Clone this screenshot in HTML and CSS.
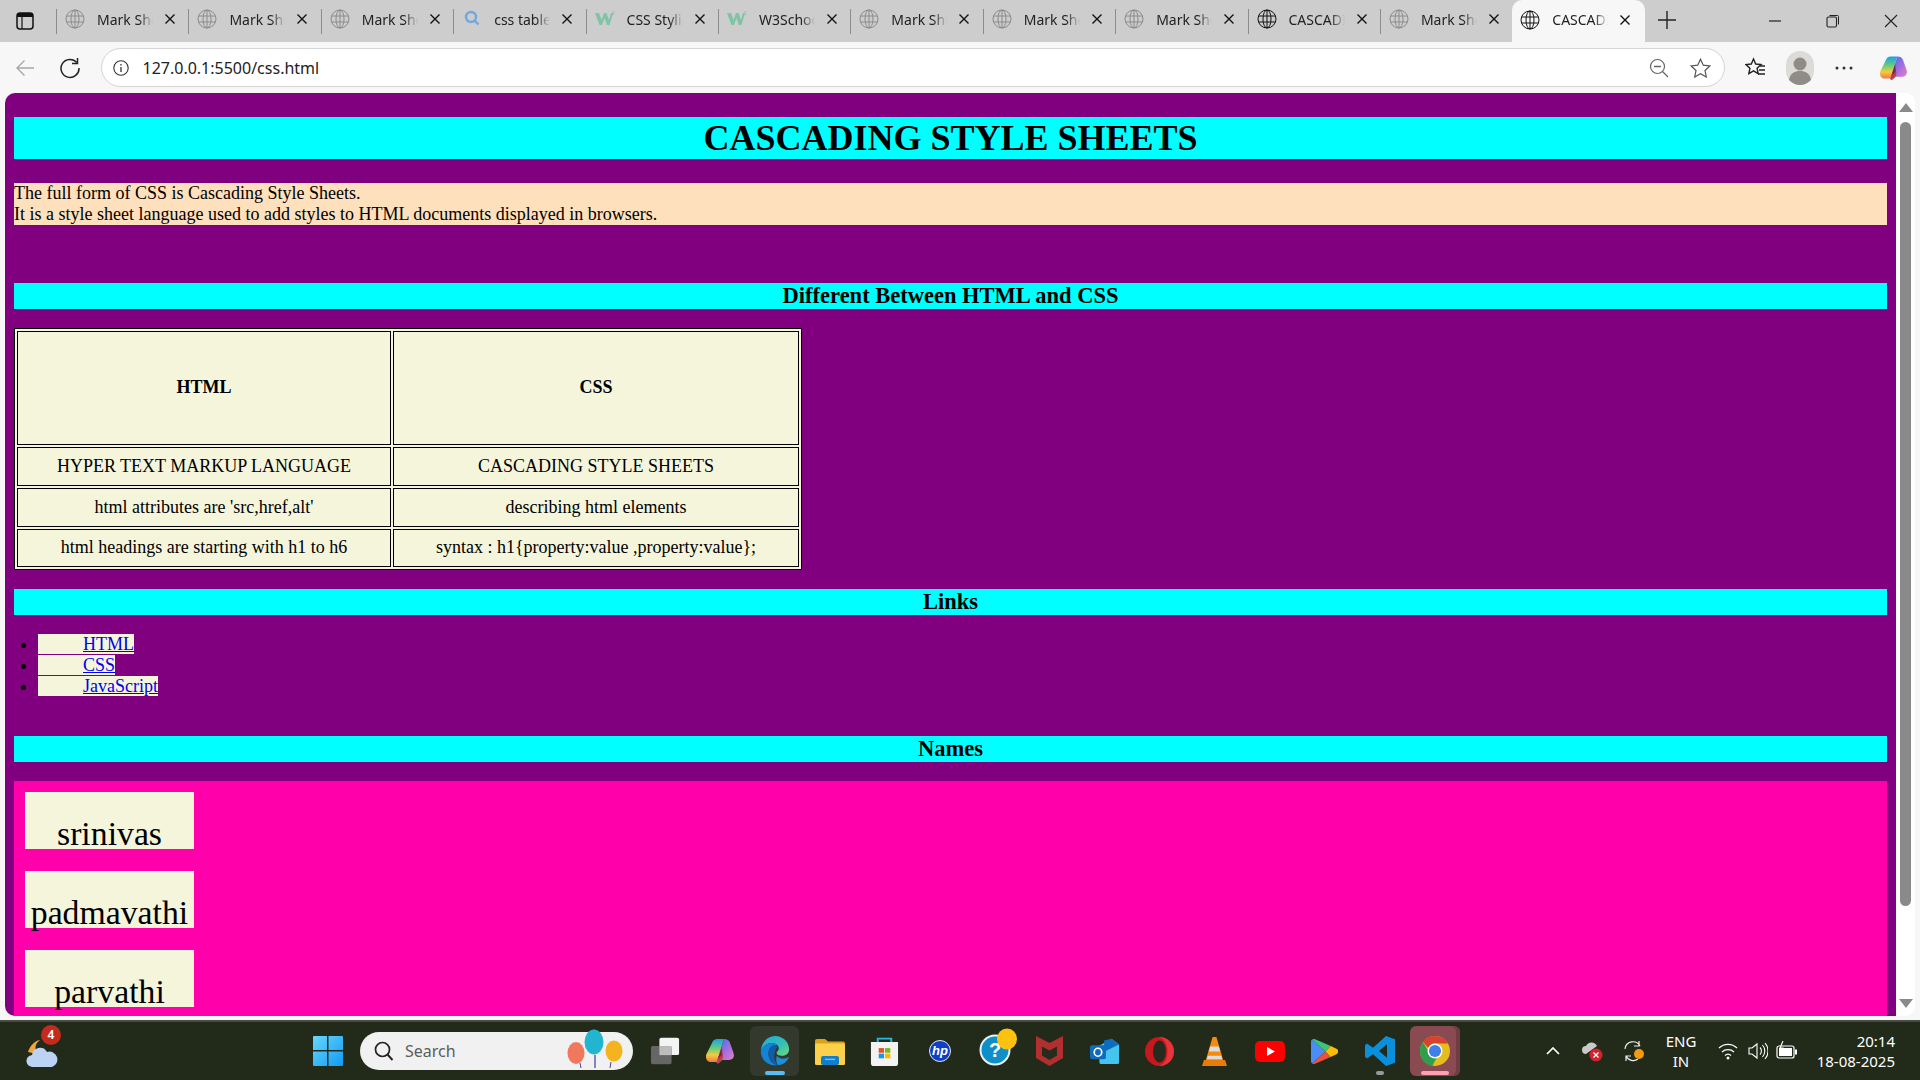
FILE: index.html
```html
<!DOCTYPE html>
<html lang="en">
<head>
  <meta charset="UTF-8" />
  <title>CASCADING STYLE SHEETS</title>
  <link rel="stylesheet" href="styles.css">
</head>
<body>
  <svg class="defs" width="0" height="0">
    <defs>
      <linearGradient id="cop1" x1="0" y1="0" x2="0" y2="1"><stop offset="0" stop-color="#1f9fe6"/><stop offset=".4" stop-color="#63cf7c"/><stop offset=".7" stop-color="#f6cb3e"/><stop offset="1" stop-color="#f0764a"/></linearGradient>
      <linearGradient id="cop2" x1="0" y1="0" x2="1" y2="1"><stop offset="0" stop-color="#2f6fe8"/><stop offset=".55" stop-color="#a96ee0"/><stop offset="1" stop-color="#ee85b8"/></linearGradient>
    </defs>
    <symbol id="globe" viewBox="0 0 20 20">
      <g fill="none" stroke="currentColor" stroke-width="1">
        <circle cx="10" cy="10" r="9"/>
        <ellipse cx="10" cy="10" rx="4" ry="9"/>
        <path d="M10 1v18M1.600 7h16.800M1.600 13h16.800"/>
      </g>
    </symbol>
    <symbol id="close" viewBox="0 0 12 12">
      <path d="M1.500 1.500l9 9M10.500 1.500l-9 9" fill="none" stroke="currentColor" stroke-width="1.400"/>
    </symbol>
    <symbol id="copilot" viewBox="0 0 28 26">
      <path d="M11 1h7l-7 23H5c-4 0-6-4-4.500-8L6 5c1-3 3-4 5-4z" fill="url(#cop1)"/>
      <path d="M18 1c3 0 5 1 6 4l3.500 10c1.500 4-1 7-4.500 7h-7l-3 3c-1 .8-2 .5-2.500-.5z" fill="url(#cop2)"/>
      <path d="M16 8l-5 15c-.3 1.500.5 2.500 2 1.800l3-2.800 1-3z" fill="#c93a3a"/>
      <path d="M15.500 10l-3.500 11 4-4z" fill="#6b2a52"/>
    </symbol>
  </svg>

  <div class="tabbar">
    <div class="tab-toggle">
      <svg width="18" height="18" viewBox="0 0 18 18"><rect x="1" y="1" width="16" height="16" rx="3" fill="none" stroke="#111" stroke-width="1.500"/><path d="M1 2.500a1.500 1.500 0 0 1 1.500-1.500h13a1.500 1.500 0 0 1 1.500 1.500V5H1z" fill="#111"/><path d="M6 5v12" stroke="#111" stroke-width="1.200"/></svg>
    </div>
    <div class="tab"><svg class="fav grey"><use href="#globe"/></svg><span class="tab-text">Mark Sheet</span><svg class="tab-x"><use href="#close"/></svg></div>
    <div class="tab"><svg class="fav grey"><use href="#globe"/></svg><span class="tab-text">Mark Sheet</span><svg class="tab-x"><use href="#close"/></svg></div>
    <div class="tab"><svg class="fav grey"><use href="#globe"/></svg><span class="tab-text">Mark Sheet</span><svg class="tab-x"><use href="#close"/></svg></div>
    <div class="tab">
      <svg class="fav" viewBox="0 0 20 20"><circle cx="9" cy="8" r="5" fill="none" stroke="#6fa8dc" stroke-width="2.400"/><path d="M12.500 11.500l4 4" stroke="#6fa8dc" stroke-width="2.400"/></svg>
      <span class="tab-text">css table border</span><svg class="tab-x"><use href="#close"/></svg>
    </div>
    <div class="tab">
      <svg class="fav" viewBox="0 0 20 20"><path d="M0 4h4l2.500 7 2.500-7h2.500l2.500 7 2-7h2l-3.500 12h-2.500l-2.500-7-2.500 7h-2.500z" fill="#7fc4a6"/><text x="16.500" y="6" font-size="5" fill="#7fc4a6" font-family="Liberation Sans, sans-serif">3</text></svg>
      <span class="tab-text">CSS Styling</span><svg class="tab-x"><use href="#close"/></svg>
    </div>
    <div class="tab">
      <svg class="fav" viewBox="0 0 20 20"><path d="M0 4h4l2.500 7 2.500-7h2.500l2.500 7 2-7h2l-3.500 12h-2.500l-2.500-7-2.500 7h-2.500z" fill="#7fc4a6"/><text x="16.500" y="6" font-size="5" fill="#7fc4a6" font-family="Liberation Sans, sans-serif">3</text></svg>
      <span class="tab-text">W3Schools</span><svg class="tab-x"><use href="#close"/></svg>
    </div>
    <div class="tab"><svg class="fav grey"><use href="#globe"/></svg><span class="tab-text">Mark Sheet</span><svg class="tab-x"><use href="#close"/></svg></div>
    <div class="tab"><svg class="fav grey"><use href="#globe"/></svg><span class="tab-text">Mark Sheet</span><svg class="tab-x"><use href="#close"/></svg></div>
    <div class="tab"><svg class="fav grey"><use href="#globe"/></svg><span class="tab-text">Mark Sheet</span><svg class="tab-x"><use href="#close"/></svg></div>
    <div class="tab"><svg class="fav"><use href="#globe"/></svg><span class="tab-text">CASCADING</span><svg class="tab-x"><use href="#close"/></svg></div>
    <div class="tab"><svg class="fav grey"><use href="#globe"/></svg><span class="tab-text">Mark Sheet</span><svg class="tab-x"><use href="#close"/></svg></div>
    <div class="tab active"><svg class="fav"><use href="#globe"/></svg><span class="tab-text">CASCADING</span><svg class="tab-x"><use href="#close"/></svg></div>
    <div class="new-tab">
      <svg width="18" height="18" viewBox="0 0 18 18"><path d="M9 0v18M0 9h18" stroke="#222" stroke-width="1.400"/></svg>
    </div>
    <div class="win-controls">
      <svg width="14" height="14" viewBox="0 0 14 14"><path d="M1 7h12" stroke="#222" stroke-width="1.200"/></svg>
      <svg width="14" height="14" viewBox="0 0 14 14"><path d="M3.500 1.500h8a1 1 0 0 1 1 1v8" fill="none" stroke="#222"/><rect x="1" y="3" width="9.500" height="10" rx="1.500" fill="none" stroke="#222" stroke-width="1.100"/></svg>
      <svg width="14" height="14" viewBox="0 0 14 14"><path d="M1 1l12 12M13 1L1 13" stroke="#222" stroke-width="1.100"/></svg>
    </div>
  </div>

  <div class="toolbar">
    <svg class="tool-back" width="20" height="18" viewBox="0 0 20 18"><path d="M19 9H2M9.500 1.500L2 9l7.500 7.500" fill="none" stroke="#a8a8a8" stroke-width="1.400"/></svg>
    <svg class="tool-reload" width="22" height="22" viewBox="0 0 22 22"><path d="M17.800 5.500A9 9 0 1 0 20 11" fill="none" stroke="#222" stroke-width="1.500"/><path d="M18.500 1v5.500H13" fill="none" stroke="#222" stroke-width="1.500"/></svg>
    <div class="address">
      <svg width="16" height="16" viewBox="0 0 16 16"><circle cx="8" cy="8" r="7.200" fill="none" stroke="#333" stroke-width="1.100"/><path d="M8 7v5M8 4v1.400" stroke="#333" stroke-width="1.300"/></svg>
      <span class="url">127.0.0.1:5500/css.html</span>
      <svg class="zoom-out" width="20" height="20" viewBox="0 0 20 20"><circle cx="8.500" cy="8.500" r="7" fill="none" stroke="#666" stroke-width="1.200"/><path d="M5 8.500h7M13.500 13.500l5.500 5.500" stroke="#666" stroke-width="1.300"/></svg>
      <svg class="star" width="21" height="20" viewBox="0 0 21 20"><path d="M10.500 1.200l2.800 6 6.500.8-4.800 4.500 1.300 6.500-5.800-3.300-5.800 3.300 1.300-6.500L1.200 8l6.500-.8z" fill="none" stroke="#555" stroke-width="1.200"/></svg>
    </div>
    <svg class="tool-favs" width="21" height="21" viewBox="0 0 21 21"><path d="M8.500 2l2.200 5 5.300.6-3.900 3.600 1 5.300-4.600-2.700-4.600 2.700 1-5.300L1 7.600 6.300 7z" fill="none" stroke="#222" stroke-width="1.400"/><path d="M15 9h5M14 13h6M13 17h7" stroke="#222" stroke-width="1.300"/></svg>
    <div class="avatar">
      <svg width="28" height="34" viewBox="0 0 28 34"><rect width="28" height="34" rx="14" fill="#dcdbd8"/><circle cx="14" cy="13" r="6.500" fill="#8f8c88"/><path d="M3 29c1-7 6-9 11-9s10 2 11 9c-3 3-7 5-11 5s-8-2-11-5z" fill="#8f8c88"/></svg>
    </div>
    <svg class="tool-dots" width="18" height="4" viewBox="0 0 18 4"><circle cx="2" cy="2" r="1.500" fill="#333"/><circle cx="9" cy="2" r="1.500" fill="#333"/><circle cx="16" cy="2" r="1.500" fill="#333"/></svg>
    <svg class="tool-copilot" width="27" height="26"><use href="#copilot"/></svg>
  </div>

  <div class="viewport-wrap">
    <div class="viewport">
      <main class="page">
        <h1 class="title">CASCADING STYLE SHEETS</h1>
        <p class="intro">The full form of CSS is Cascading Style Sheets.<br>It is a style sheet language used to add styles to HTML documents displayed in browsers.</p>

        <h3 class="bar bar-diff">Different Between HTML and CSS</h3>
        <table class="compare">
          <tr class="head"><th class="col-a">HTML</th><th class="col-b">CSS</th></tr>
          <tr><td>HYPER TEXT MARKUP LANGUAGE</td><td>CASCADING STYLE SHEETS</td></tr>
          <tr><td>html attributes are 'src,href,alt'</td><td>describing html elements</td></tr>
          <tr class="last"><td>html headings are starting with h1 to h6</td><td>syntax : h1{property:value ,property:value};</td></tr>
        </table>

        <h3 class="bar bar-links">Links</h3>
        <ul class="links">
          <li><a href="#">HTML</a></li>
          <li><a href="#">CSS</a></li>
          <li><a href="#">JavaScript</a></li>
        </ul>

        <h3 class="bar bar-names">Names</h3>
        <div class="names">
          <div class="name">srinivas</div>
          <div class="name">padmavathi</div>
          <div class="name">parvathi</div>
        </div>
      </main>
      <div class="scrollbar">
        <span class="arrow up"></span>
        <span class="thumb"></span>
        <span class="arrow down"></span>
      </div>
    </div>
  </div>

  <footer class="taskbar">
    <div class="weather">
      <svg width="32" height="36" viewBox="0 0 32 36">
        <path d="M14 7a10 10 0 0 0-3 14L2 19c2-6 6-11 12-12z" fill="#f2a73b"/>
        <path d="M7 34a6 6 0 0 1-1-12 8 8 0 0 1 15-3 7 7 0 0 1 5 15z" fill="#bcd3f4"/>
      </svg>
      <span class="badge">4</span>
    </div>

    <div class="start">
      <svg width="30" height="30" viewBox="0 0 30 30">
        <defs><linearGradient id="win" x1="0" y1="0" x2="1" y2="1"><stop offset="0" stop-color="#6ad6fb"/><stop offset="1" stop-color="#0f9bf5"/></linearGradient></defs>
        <path d="M1 0h13v14H0V1a1 1 0 0 1 1-1zM15.500 0H29a1 1 0 0 1 1 1v13H15.500zM0 15.500h14V30H1a1 1 0 0 1-1-1zM15.500 15.500H30V29a1 1 0 0 1-1 1H15.500z" fill="url(#win)"/>
      </svg>
    </div>

    <div class="search">
      <svg width="20" height="20" viewBox="0 0 20 20"><circle cx="8.500" cy="8.500" r="7" fill="none" stroke="#222" stroke-width="1.700"/><path d="M13.500 13.500l5 5.500" stroke="#222" stroke-width="1.900"/></svg>
      <span class="search-text">Search</span>
      <svg class="balloons" width="58" height="40" viewBox="0 0 58 40">
        <ellipse cx="9" cy="24" rx="8.500" ry="11" fill="#f0785c"/>
        <path d="M13 34l1 5" stroke="#5a3d8a"/>
        <ellipse cx="47" cy="22" rx="8.500" ry="10.500" fill="#f4b31f"/>
        <path d="M44 33l-1 6" stroke="#5a3d8a"/>
        <ellipse cx="27" cy="13" rx="9.500" ry="12.500" fill="#22b5cf"/>
        <path d="M28 26v13" stroke="#3b3f9a" stroke-width="1.200"/>
      </svg>
    </div>

    <div class="apps">
      <div class="app">
        <svg width="30" height="28" viewBox="0 0 32 34" preserveAspectRatio="none"><rect x="10" y="1" width="21" height="21" rx="2" fill="#f4f4f4"/><rect x="1" y="11" width="22" height="22" rx="2" fill="#666"/><rect x="10" y="11" width="13" height="11" fill="#bdbdbd"/></svg>
      </div>
      <div class="app">
        <svg width="28" height="26"><use href="#copilot"/></svg>
      </div>
      <div class="app is-edge">
        <svg width="30" height="30" viewBox="0 0 32 32">
          <defs><linearGradient id="edge" x1="0" y1="0" x2="1" y2="1"><stop offset="0" stop-color="#1fa8e0"/><stop offset=".6" stop-color="#35c1b0"/><stop offset="1" stop-color="#6fdc7e"/></linearGradient></defs>
          <path d="M1 15C2 6 9 0 16 0c9 0 15 7 15 14 0 5-4 7-8 7-4 0-6-2-5-4 2-2 3-4 1-7-3-4-13-4-18 5z" fill="url(#edge)"/>
          <path d="M1 15c5-9 15-9 18-5-5-2-10 2-10 9 0 6 4 11 10 12C9 33 0 25 1 15z" fill="#1583d4"/>
          <path d="M19 10c-5-2-10 2-10 9 0 6 4 11 10 12-3-4-5-9-3-14 .5-3 2-5 3-7z" fill="#0f5da8"/>
          <path d="M19 31c6 0 10-4 12-9-4 3-10 3-13-1-1 3-1 7 1 10z" fill="#1b8fd8"/>
        </svg>
        <span class="run-pill blue"></span>
      </div>
      <div class="app">
        <svg width="30" height="27" viewBox="0 0 30 30" preserveAspectRatio="none"><path d="M0 3a2 2 0 0 1 2-2h8l3 3h15a2 2 0 0 1 2 2v4H0z" fill="#d9a21b"/><rect y="6" width="30" height="24" rx="1.500" fill="#fbd14b"/><rect x="6" y="20" width="18" height="10" rx="2" fill="#0f7fcc"/><rect x="10" y="23" width="10" height="1.500" fill="#7cc3ee"/></svg>
      </div>
      <div class="app">
        <svg width="29" height="29" viewBox="0 0 30 34" preserveAspectRatio="none"><path d="M8 6V2h14v4" fill="none" stroke="#27b5e6" stroke-width="2"/><path d="M1 6h28v25a3 3 0 0 1-3 3H4a3 3 0 0 1-3-3z" fill="#f3f3f3"/><rect x="9" y="13" width="5.500" height="5.500" fill="#e8522a"/><rect x="15.500" y="13" width="5.500" height="5.500" fill="#7eb821"/><rect x="9" y="19.500" width="5.500" height="5.500" fill="#0d9cec"/><rect x="15.500" y="19.500" width="5.500" height="5.500" fill="#fbb900"/></svg>
      </div>
      <div class="app">
        <svg width="22" height="22" viewBox="0 0 22 22"><circle cx="11" cy="11" r="10.500" fill="#0f3fc4" stroke="#dfe6ff"/><text x="11" y="15" font-size="13" font-style="italic" font-weight="700" text-anchor="middle" fill="#fff" font-family="Liberation Sans, sans-serif">hp</text></svg>
      </div>
      <div class="app">
        <svg width="54" height="46" viewBox="0 0 54 46"><circle cx="27" cy="22" r="14.500" fill="#0f8fca" stroke="#e6f4fa" stroke-width="2"/><text x="27" y="29" font-size="20" font-weight="700" text-anchor="middle" fill="#fff" font-family="Liberation Sans, sans-serif">?</text><ellipse cx="39" cy="11" rx="10" ry="10.500" fill="#fdc20f"/></svg>
      </div>
      <div class="app">
        <svg width="27" height="30" viewBox="0 0 27 30"><path d="M0 0l13.500 7L27 0v22l-13.500 8L0 22z" fill="#b32f2f"/><path d="M6 10.500l7.500 4 7.500-4v9l-7.500 4.500-7.500-4.500z" fill="#262b1e"/></svg>
      </div>
      <div class="app">
        <svg width="30" height="26" viewBox="0 0 32 32" preserveAspectRatio="none"><path d="M6 12l17-11 8 7v22a2 2 0 0 1-2 2H12a2 2 0 0 1-2-2v-6z" fill="#43c5f0"/><path d="M15 3l8-2 8 7-16 9z" fill="#0f6cbd"/><rect y="9" width="17" height="17" rx="2" fill="#0f6cbd"/><ellipse cx="8.500" cy="17.500" rx="4" ry="5" fill="none" stroke="#fff" stroke-width="1.800"/></svg>
      </div>
      <div class="app">
        <svg width="29" height="29" viewBox="0 0 29 29"><ellipse cx="14.500" cy="14.500" rx="14.500" ry="14.500" fill="#c8181f"/><ellipse cx="14.500" cy="14.500" rx="6.500" ry="11" fill="#262b1e"/><path d="M14.500 0c8 0 14.500 6.500 14.500 14.500S22.500 29 14.500 29c5-2 8-8 8-14.500S19.500 2 14.500 0z" fill="#e6343a"/></svg>
      </div>
      <div class="app">
        <svg width="25" height="29" viewBox="0 0 26 34" preserveAspectRatio="none"><path d="M11 0h4l7 27H4z" fill="#f58a0b"/><path d="M8.500 11h9l1.500 6H7zM6 22h14l1 4H5z" fill="#dcdcdc"/><path d="M2 27h22l2 7H0z" fill="#e97c06"/></svg>
      </div>
      <div class="app">
        <svg width="30" height="21" viewBox="0 0 30 21"><rect width="30" height="21" rx="5" fill="#f00"/><path d="M12 6l8 4.500-8 4.500z" fill="#fff"/></svg>
      </div>
      <div class="app">
        <svg width="27" height="27" viewBox="0 0 26 34" preserveAspectRatio="none"><path d="M1 2l13 15L1 32a3 3 0 0 1-1-2V4a3 3 0 0 1 1-2z" fill="#4b8df5"/><path d="M1 2c1-1 2-1 3-.5L19 10l-5 7z" fill="#3cc47a"/><path d="M1 32c1 1 2 1 3 .5L19 24l-5-7z" fill="#e8503f"/><path d="M19 10l6 4c1.500 1 1.500 5 0 6l-6 4-5-7z" fill="#fbbc05"/></svg>
      </div>
      <div class="app">
        <svg width="30" height="30" viewBox="0 0 30 36" preserveAspectRatio="none"><path d="M21 0l9 4v28l-9 4L8 22l-6 5-2-2v-14l2-2 6 5zM22 10l-8 8 8 8z" fill="#0a8fdc"/></svg>
        <span class="run-pill grey"></span>
      </div>
      <div class="app is-chrome">
        <svg width="30" height="30" viewBox="0 0 32 32">
          <circle cx="16" cy="16" r="16" fill="#e6bd1e"/>
          <path d="M16 0c6 0 11 3 14 8H16c-4 0-6 2-7 5L3 6c3-4 8-6 13-6z" fill="#d8412f"/>
          <path d="M3 6l7 12c2 3 4 5 8 5l-5 9C5 31 0 24 0 16c0-4 1-7 3-10z" fill="#2f9e4f"/>
          <circle cx="16" cy="16" r="8" fill="#fff"/>
          <circle cx="16" cy="16" r="6.500" fill="#3f7fe8"/>
        </svg>
        <span class="run-pill pink"></span>
      </div>
    </div>

    <div class="tray">
      <svg class="tray-chev" width="14" height="8" viewBox="0 0 14 8"><path d="M1 7l6-6 6 6" fill="none" stroke="#fff" stroke-width="1.700"/></svg>
      <svg class="tray-cloud" width="22" height="22" viewBox="0 0 22 22"><path d="M5 14a4 4 0 0 1 0-8 6 6 0 0 1 11 0z" fill="#c9c9c9"/><circle cx="15" cy="15" r="6.500" fill="#d3222c"/><path d="M12.500 12.500l5 5M17.500 12.500l-5 5" stroke="#fff" stroke-width="1.300"/></svg>
      <svg class="tray-sync" width="22" height="22" viewBox="0 0 22 22"><path d="M2 9a8 8 0 0 1 15-3M16 1v5h-5M15 19a8 8 0 0 1-12-3M3 21v-5h5" fill="none" stroke="#eee" stroke-width="1.200"/><circle cx="16" cy="14" r="5" fill="#f59a0c"/></svg>
      <div class="lang"><span>ENG</span><span>IN</span></div>
      <svg class="tray-wifi" width="20" height="18" viewBox="0 0 20 18"><path d="M1 6a13 13 0 0 1 18 0M4 10a9 9 0 0 1 12 0M7 13.500a4.500 4.500 0 0 1 6 0" fill="none" stroke="#fff" stroke-width="1.300"/><circle cx="10" cy="16" r="1.500" fill="#fff"/></svg>
      <svg class="tray-vol" width="20" height="20" viewBox="0 0 20 20"><path d="M1 7h3l5-4v14l-5-4H1z" fill="none" stroke="#fff" stroke-width="1.100"/><path d="M12 6.500a5 5 0 0 1 0 7M14.500 4a9 9 0 0 1 0 12M17 2a12 12 0 0 1 0 16" fill="none" stroke="#fff" stroke-width="1.100"/></svg>
      <svg class="tray-batt" width="22" height="20" viewBox="0 0 22 20"><rect x="1" y="5" width="17" height="12" rx="2" fill="none" stroke="#fff" stroke-width="1.200"/><rect x="3" y="7" width="13" height="8" fill="#fff"/><rect x="19" y="8.500" width="2" height="5" fill="#fff"/><path d="M7 0L4 7h3l-1 5" fill="none" stroke="#fff" stroke-width="1.100"/></svg>
      <div class="clock"><span>20:14</span><span>18-08-2025</span></div>
    </div>
  </footer>
</body>
</html>
```

FILE: styles.css
```css
* {
  box-sizing: border-box;
}

html, body {
  margin: 0;
  height: 100%;
  overflow: hidden;
}

body {
  display: flex;
  flex-direction: column;
  width: 1920px;
  height: 1080px;
  background: #f7f7f7;
  font-family: 'Noto Sans', sans-serif;
}

.defs {
  position: absolute;
}

/* tab strip */
.tabbar {
  display: flex;
  align-items: stretch;
  height: 42px;
  flex: none;
  background: #cdcdcd;
}

.tab-toggle {
  width: 56px;
  display: flex;
  align-items: center;
  justify-content: center;
  padding-right: 7px;
}

.tab {
  width: 132.4px;
  flex: none;
  display: flex;
  align-items: center;
  border-left: 1px solid #8c8c8c;
  padding: 0 0 5px 8px;
  color: #222;
  font-size: 14px;
  margin: 9px 0 8px;
}

.tab.active {
  background: #f7f7f7;
  border-left: 0;
  margin: 0;
  border-radius: 10px 10px 0 0;
  padding: 0 0 3px 8px;
}

.fav {
  width: 20px;
  height: 20px;
  flex: none;
  color: #111;
}

.fav.grey {
  color: #8b8b8b;
}

.tab-text {
  width: 56px;
  margin-left: 12px;
  white-space: nowrap;
  overflow: hidden;
  -webkit-mask-image: linear-gradient(to right, #000 75%, transparent);
  mask-image: linear-gradient(to right, #000 75%, transparent);
}

.tab-x {
  width: 12px;
  height: 12px;
  margin-left: 11px;
  flex: none;
  color: #111;
}

.new-tab {
  width: 44px;
  display: flex;
  align-items: center;
  justify-content: center;
  padding-bottom: 2px;
}

.win-controls {
  margin-left: auto;
  display: flex;
  align-items: center;
  gap: 44px;
  padding-right: 22px;
}

/* address row */
.toolbar {
  height: 51px;
  flex: none;
  display: flex;
  align-items: center;
  background: #f7f7f7;
  padding-left: 15px;
}

.tool-back {
  flex: none;
}

.tool-reload {
  margin-left: 24px;
  flex: none;
}

.address {
  margin-left: 20px;
  width: 1624px;
  height: 39px;
  flex: none;
  display: flex;
  align-items: center;
  background: #fff;
  border: 1px solid #d4d4d4;
  border-radius: 20px;
  padding: 0 13px 0 11px;
}

.url {
  margin-left: 13.5px;
  font-size: 16px;
  color: #222;
}

.zoom-out {
  margin-left: auto;
}

.star {
  margin-left: 21px;
}

.tool-favs {
  margin-left: 20px;
  flex: none;
}

.avatar {
  margin-left: 20px;
  display: flex;
}

.tool-dots {
  margin-left: 21px;
  flex: none;
}

.tool-copilot {
  margin-left: 27px;
  flex: none;
}

/* page area */
.viewport-wrap {
  height: 927px;
  flex: none;
  background: #f7f7f7;
  padding: 0 5px 4px;
}

.viewport {
  display: flex;
  height: 923px;
  background: #fff;
  border-radius: 10px;
  overflow: hidden;
}

.page {
  width: 1891px;
  flex: none;
  overflow: hidden;
  background: #800080;
  padding: 24px 9px 0;
  font-family: 'Liberation Serif', serif;
  font-size: 18px;
  color: #000;
}

.title {
  margin: 0;
  background: #0ff;
  font-size: 36px;
  line-height: 42px;
  text-align: center;
}

.intro {
  margin: 24px 0 0;
  background: #ffe0bd;
  line-height: 21px;
}

.bar {
  margin: 0;
  background: #0ff;
  font-size: 22.5px;
  line-height: 26px;
  text-align: center;
}

.bar-diff {
  margin-top: 58px;
}

.compare {
  margin-top: 19px;
  background: #f5f5dc;
  border: 1px solid #000;
  border-spacing: 2px;
}

.compare th, .compare td {
  border: 1px solid #000;
  text-align: center;
  padding: 0;
  height: 39px;
  background: #f5f5dc;
}

.compare .head th {
  height: 114px;
  padding-bottom: 1px;
}

.compare .last td {
  height: 38px;
  padding-bottom: 1px;
}

.col-a {
  width: 374px;
}

.col-b {
  width: 406px;
}

.bar-links {
  margin-top: 19px;
}

.links {
  margin: 19px 0 0;
  padding: 0 0 0 24px;
}

.links li {
  height: 21px;
  line-height: 20px;
}

.links a {
  display: inline-block;
  height: 20px;
  line-height: 20px;
  padding-left: 45px;
  background: #f5f5dc;
  color: #00e;
}

.bar-names {
  margin-top: 39px;
}

.names {
  margin-top: 19px;
  background: #f0a;
  padding: 11px 11px 30px;
  height: 240px;
}

.name {
  width: 169px;
  height: 56.5px;
  margin-bottom: 22.5px;
  background: #f5f5dc;
  font-size: 33.75px;
  text-align: center;
  line-height: 39px;
  padding-top: 22px;
}

.scrollbar {
  width: 19px;
  flex: none;
  background: #fff;
  display: flex;
  flex-direction: column;
  align-items: center;
  padding: 10px 0 8px;
}

.arrow {
  width: 0;
  height: 0;
  border-left: 7px solid transparent;
  border-right: 7px solid transparent;
}

.arrow.up {
  border-bottom: 9px solid #8a8a8a;
}

.arrow.down {
  border-top: 9px solid #8a8a8a;
  margin-top: auto;
}

.thumb {
  width: 11px;
  height: 784px;
  margin-top: 10px;
  background: #8a8a8a;
  border-radius: 6px;
}

/* windows taskbar */
.taskbar {
  height: 60px;
  flex: none;
  display: flex;
  align-items: center;
  background: #222a1a;
  border-top: 2px solid #4a4d46;
  color: #fff;
  padding-left: 26px;
}

.weather {
  width: 32px;
  height: 36px;
  position: relative;
  flex: none;
}

.badge {
  position: absolute;
  top: -8px;
  left: 15px;
  width: 20px;
  height: 20px;
  border-radius: 50%;
  background: #c42b1c;
  font-size: 12px;
  text-align: center;
  line-height: 20px;
  font-weight: 600;
}

.start {
  margin-left: 255px;
  display: flex;
  flex: none;
}

.search {
  margin-left: 17px;
  width: 273px;
  height: 38px;
  flex: none;
  display: flex;
  align-items: center;
  background: #f1f1f1;
  border-radius: 19px;
  padding-left: 14px;
  position: relative;
}

.search-text {
  margin-left: 11px;
  font-size: 16px;
  color: #5d5d5d;
}

.balloons {
  position: absolute;
  right: 8px;
  top: -3px;
}

.apps {
  margin-left: 4px;
  display: flex;
  flex: none;
}

.app {
  width: 55px;
  height: 50px;
  display: flex;
  align-items: center;
  justify-content: center;
  position: relative;
  flex: none;
}

.is-edge {
  background: #33392c;
  border-radius: 6px;
  width: 49px;
  margin: 0 3px;
}

.is-chrome {
  background: #8a4a52;
  box-shadow: inset -4px 0 0 #723c44;
  border-radius: 6px;
  width: 50px;
  margin: 0 2.5px;
}

.run-pill {
  position: absolute;
  bottom: 1px;
  left: 50%;
  height: 4px;
  border-radius: 2px;
  transform: translateX(-50%);
}

.run-pill.blue {
  width: 20px;
  background: #59bdf5;
}

.run-pill.grey {
  width: 8px;
  background: #9a9a9a;
}

.run-pill.pink {
  width: 28px;
  background: #ffa0b0;
}

.tray {
  margin-left: 84px;
  flex: 1;
  display: flex;
  align-items: center;
  padding-right: 25px;
  font-size: 15px;
}

.tray-cloud {
  margin-left: 21px;
}

.tray-sync {
  margin-left: 20px;
}

.lang {
  margin-left: 16px;
  width: 40px;
  display: flex;
  flex-direction: column;
  align-items: center;
  line-height: 20px;
}

.tray-wifi {
  margin-left: 17px;
}

.tray-vol {
  margin-left: 10px;
}

.tray-batt {
  margin-left: 8px;
}

.clock {
  margin-left: auto;
  display: flex;
  flex-direction: column;
  align-items: flex-end;
  line-height: 20px;
}
```
